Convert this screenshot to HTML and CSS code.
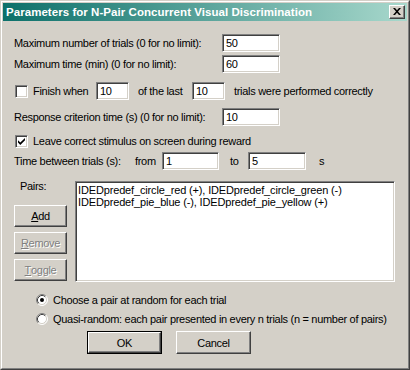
FILE: index.html
```html
<!DOCTYPE html>
<html>
<head>
<meta charset="utf-8">
<link rel="stylesheet" href="styles.css">
</head>
<body>
<div class="window">
  <div class="frame">
    <div class="titlebar">
      <span class="title">Parameters for N-Pair Concurrent Visual Discrimination</span>
      <span class="close"><svg width="8" height="7" viewBox="0 0 8 7"><path d="M0 0h2l2 2.2L6 0h2L5 3.5 8 7H6L4 4.8 2 7H0l3-3.5z" fill="#000"/></svg></span>
    </div>
    <div class="content">
      <div class="row row-a">
        <span class="lbl-wide">Maximum number of trials (0 for no limit):</span>
        <span class="field w58">50</span>
      </div>
      <div class="row row-b">
        <span class="lbl-wide">Maximum time (min) (0 for no limit):</span>
        <span class="field w58">60</span>
      </div>
      <div class="row row-c">
        <span class="check"></span>
        <span class="lbl-finish">Finish when</span>
        <span class="field w33">10</span>
        <span class="lbl-last">of the last</span>
        <span class="field w33">10</span>
        <span class="lbl-trials">trials were performed correctly</span>
      </div>
      <div class="row row-d">
        <span class="lbl-wide">Response criterion time (s) (0 for no limit):</span>
        <span class="field w58">10</span>
      </div>
      <div class="row row-e">
        <span class="check"><svg width="7" height="7" viewBox="0 0 7 7"><path d="M0 2.2l2.3 2.3L7 0v2.2L2.3 6.9 0 4.6z" fill="#000"/></svg></span>
        <span class="lbl-leave">Leave correct stimulus on screen during reward</span>
      </div>
      <div class="row row-f">
        <span class="lbl-between">Time between trials (s):</span>
        <span class="lbl-from">from</span>
        <span class="field w57">1</span>
        <span class="lbl-to">to</span>
        <span class="field w58">5</span>
        <span class="lbl-s">s</span>
      </div>
      <div class="pairs">
        <div class="pairs-side">
          <span class="lbl-pairs">Pairs:</span>
          <span class="btn btn-add"><u>A</u>dd</span>
          <span class="btn btn-side disabled"><u>R</u>emove</span>
          <span class="btn btn-side disabled"><u>T</u>oggle</span>
        </div>
        <div class="listbox">
          <div class="item">IDEDpredef_circle_red (+), IDEDpredef_circle_green (-)</div>
          <div class="item">IDEDpredef_pie_blue (-), IDEDpredef_pie_yellow (+)</div>
        </div>
      </div>
      <div class="row radio-row radio-1">
        <svg class="radio" width="12" height="12" viewBox="0 0 12 12">
          <circle cx="6" cy="6" r="5" fill="#fff"/>
          <path d="M2.11 9.89A5.5 5.5 0 0 1 9.89 2.11" fill="none" stroke="#808080"/>
          <path d="M9.89 2.11A5.5 5.5 0 0 1 2.11 9.89" fill="none" stroke="#fff"/>
          <path d="M2.82 9.18A4.5 4.5 0 0 1 9.18 2.82" fill="none" stroke="#404040"/>
          <path d="M9.18 2.82A4.5 4.5 0 0 1 2.82 9.18" fill="none" stroke="#d4d0c8"/>
          <circle cx="6" cy="6" r="2" fill="#000"/>
        </svg>
        <span>Choose a pair at random for each trial</span>
      </div>
      <div class="row radio-row radio-2">
        <svg class="radio" width="12" height="12" viewBox="0 0 12 12">
          <circle cx="6" cy="6" r="5" fill="#fff"/>
          <path d="M2.11 9.89A5.5 5.5 0 0 1 9.89 2.11" fill="none" stroke="#808080"/>
          <path d="M9.89 2.11A5.5 5.5 0 0 1 2.11 9.89" fill="none" stroke="#fff"/>
          <path d="M2.82 9.18A4.5 4.5 0 0 1 9.18 2.82" fill="none" stroke="#404040"/>
          <path d="M9.18 2.82A4.5 4.5 0 0 1 2.82 9.18" fill="none" stroke="#d4d0c8"/>
        </svg>
        <span>Quasi-random: each pair presented in every n trials (n = number of pairs)</span>
      </div>
      <div class="actions">
        <span class="default-wrap"><span class="btn btn-dlg">OK</span></span>
        <span class="btn btn-dlg btn-cancel">Cancel</span>
      </div>
    </div>
  </div>
</div>
</body>
</html>
```
FILE: styles.css
```css
* { box-sizing: border-box; }

body {
  margin: 0;
  background: #d4d0c8;
  font-family: "Liberation Sans", Arial, sans-serif;
  font-size: 11px;
  letter-spacing: -0.3px;
  color: #000;
}

.window {
  width: 410px;
  height: 370px;
  background: #d4d0c8;
  border: 1px solid;
  border-color: #d4d0c8 #404040 #404040 #d4d0c8;
}

.frame {
  height: 100%;
  border: 1px solid;
  border-color: #ffffff #808080 #808080 #ffffff;
  padding: 1px;
  display: flex;
  flex-direction: column;
}

.titlebar {
  height: 18px;
  flex: none;
  background: linear-gradient(to right, #0c706a, #a8d8cc);
  display: flex;
  align-items: center;
  justify-content: space-between;
  padding: 0 2px 0 3px;
}

.title {
  color: #fff;
  font-weight: bold;
  font-size: 11.5px;
  letter-spacing: 0.05px;
}

.close {
  width: 16px;
  height: 14px;
  background: #d4d0c8;
  border: 1px solid;
  border-color: #fff #404040 #404040 #fff;
  box-shadow: inset -1px -1px #808080;
  display: flex;
  align-items: center;
  justify-content: center;
  padding: 0 1px 1px 0;
}

.content {
  flex: 1;
  display: flex;
  flex-direction: column;
  padding-left: 11px;
}

.row {
  display: flex;
  align-items: center;
  height: 18px;
  flex: none;
  white-space: nowrap;
}

.row-a { margin-top: 13px; }
.row-b { margin-top: 3px; }
.row-c { margin-top: 9px; }
.row-d { margin-top: 8px; }
.row-e { margin-top: 6px; }
.row-f { margin-top: 2px; }

.lbl-wide { width: 208px; }

.field {
  height: 18px;
  background: #fff;
  border: 1px solid;
  border-color: #808080 #fff #fff #808080;
  box-shadow: inset 1px 1px #404040, inset -1px -1px #d4d0c8;
  padding: 0 3px;
  line-height: 16px;
}

.w58 { width: 58px; }
.w57 { width: 57px; }
.w33 { width: 33px; }

.check {
  width: 13px;
  height: 13px;
  margin-left: 1px;
  margin-right: 5px;
  background: #fff;
  border: 1px solid;
  border-color: #808080 #fff #fff #808080;
  box-shadow: inset 1px 1px #404040, inset -1px -1px #d4d0c8;
  display: flex;
  align-items: center;
  justify-content: center;
}

.lbl-finish { width: 63px; }
.lbl-last { margin-left: 9px; width: 54px; }
.lbl-trials { margin-left: 9px; }

.lbl-between { width: 121px; }
.lbl-from { width: 27px; }
.lbl-to { margin-left: 11px; width: 18px; }
.lbl-s { margin-left: 13px; }

.pairs {
  display: flex;
  height: 101px;
  margin-top: 11px;
  flex: none;
}

.pairs-side {
  width: 61px;
  display: flex;
  flex-direction: column;
}

.lbl-pairs {
  margin-left: 6px;
  margin-top: -1px;
  height: 13px;
  line-height: 13px;
}

.btn {
  display: flex;
  align-items: center;
  justify-content: center;
  background: #d4d0c8;
  border: 1px solid;
  border-color: #fff #404040 #404040 #fff;
  box-shadow: inset -1px -1px #808080;
}

.btn-add, .btn-side {
  width: 53px;
  height: 22px;
}

.btn-add { margin-top: 12px; }
.btn-side { margin-top: 5px; }

.disabled {
  color: #808080;
  text-shadow: 1px 1px 0 #fff;
}

.listbox {
  width: 320px;
  height: 101px;
  background: #fff;
  border: 1px solid;
  border-color: #808080 #fff #fff #808080;
  box-shadow: inset 1px 1px #404040, inset -1px -1px #d4d0c8;
  padding: 2px 2px;
  white-space: nowrap;
  letter-spacing: -0.15px;
}

.item {
  height: 12px;
  line-height: 12px;
}

.radio-row { margin-left: 22px; }
.radio { margin-right: 5px; flex: none; }
.radio-1 { margin-top: 9px; }
.radio-2 { margin-top: 1px; }

.actions {
  display: flex;
  margin-top: 3px;
  margin-left: 73px;
  gap: 14px;
}

.default-wrap {
  display: flex;
  border: 1px solid #000;
  width: 75px;
  height: 23px;
}

.default-wrap .btn-dlg { width: 73px; height: 21px; }

.btn-dlg { width: 75px; height: 23px; }
```
